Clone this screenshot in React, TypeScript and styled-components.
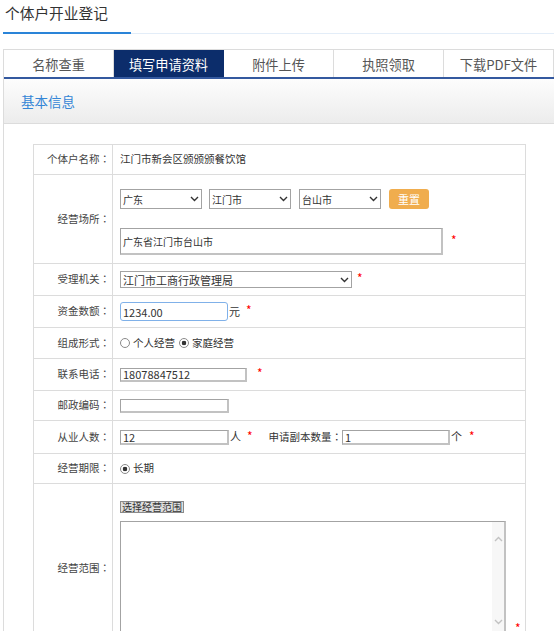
import React from 'react';
import styled, { createGlobalStyle } from 'styled-components';

const GlobalStyle = createGlobalStyle`
  html, body {
    margin: 0;
    padding: 0;
    overflow: hidden;
    background: #fff;
  }
  body {
    font-family: "Noto Sans CJK SC", "Microsoft YaHei", sans-serif;
    color: #333;
  }
  * {
    box-sizing: border-box;
  }
`;

const tabs = ['名称查重', '填写申请资料', '附件上传', '执照领取', '下载PDF文件'];

const Chevron = ({ up, color = '#333' }: { up?: boolean; color?: string }) => (
  <svg width="9" height="6" viewBox="0 0 9 6">
    <path
      d={up ? 'M1 5L4.5 1.5L8 5' : 'M1 1L4.5 4.5L8 1'}
      fill="none"
      stroke={color}
      strokeWidth="1.4"
    />
  </svg>
);

// full-width colon, centred the way the original font draws it
const C = () => <Colon>：</Colon>;

const App = () => {
  return (
    <Page>
      <GlobalStyle />
      <TitleBar>
        <Title>个体户开业登记</Title>
      </TitleBar>
      <Panel>
        <TabBar>
          {tabs.map((t, i) => (
            <Tab key={t} $active={i === 1}>
              {t}
            </Tab>
          ))}
        </TabBar>
        <SectionHeader>基本信息</SectionHeader>

        <FormTable>
          <Row $h={30}>
            <Label>个体户名称<C /></Label>
            <Value>江门市新会区颁颁颁餐饮馆</Value>
          </Row>

          <Row $h={89}>
            <Label>经营场所<C /></Label>
            <Value $top={14} $gap={19}>
              <Line>
                <SelectBox $w={82} $h={20}>
                  <Select defaultValue="gd" $size={10}>
                    <option value="gd">广东</option>
                  </Select>
                  <Arrow>
                    <Chevron />
                  </Arrow>
                </SelectBox>
                <SelectBox $w={82} $h={20} $ml={7}>
                  <Select defaultValue="jm" $size={10}>
                    <option value="jm">江门市</option>
                  </Select>
                  <Arrow>
                    <Chevron />
                  </Arrow>
                </SelectBox>
                <SelectBox $w={82} $h={20} $ml={8}>
                  <Select defaultValue="ts" $size={10}>
                    <option value="ts">台山市</option>
                  </Select>
                  <Arrow>
                    <Chevron />
                  </Arrow>
                </SelectBox>
                <ResetButton>重置</ResetButton>
              </Line>
              <Line>
                <TextInput $w={323} $h={27} $size={10} defaultValue="广东省江门市台山市" />
                <Star $ml={8}>*</Star>
              </Line>
            </Value>
          </Row>

          <Row $h={32}>
            <Label>受理机关<C /></Label>
            <Value>
              <Line>
                <SelectBox $w={232} $h={17}>
                  <Select defaultValue="gs" $size={11}>
                    <option value="gs">江门市工商行政管理局</option>
                  </Select>
                  <Arrow>
                    <Chevron />
                  </Arrow>
                </SelectBox>
                <Star $ml={5}>*</Star>
              </Line>
            </Value>
          </Row>

          <Row $h={32}>
            <Label>资金数额<C /></Label>
            <Value>
              <Line>
                <TextInput $w={108} $h={19} $focus defaultValue="1234.00" />
                <Unit>元</Unit>
                <Star $ml={6}>*</Star>
              </Line>
            </Value>
          </Row>

          <Row $h={31}>
            <Label>组成形式<C /></Label>
            <Value>
              <Line>
                <RadioLabel $mr={4}>
                  <Radio type="radio" name="form" />
                  个人经营
                </RadioLabel>
                <RadioLabel>
                  <Radio type="radio" name="form" defaultChecked />
                  家庭经营
                </RadioLabel>
              </Line>
            </Value>
          </Row>

          <Row $h={32}>
            <Label>联系电话<C /></Label>
            <Value>
              <Line>
                <TextInput $w={127} $h={14} defaultValue="18078847512" />
                <Star $ml={10}>*</Star>
              </Line>
            </Value>
          </Row>

          <Row $h={30}>
            <Label>邮政编码<C /></Label>
            <Value>
              <Line>
                <TextInput $w={109} $h={14} />
              </Line>
            </Value>
          </Row>

          <Row $h={33}>
            <Label>从业人数<C /></Label>
            <Value>
              <Line>
                <TextInput $w={109} $h={15} defaultValue="12" />
                <Unit>人</Unit>
                <Star $ml={6}>*</Star>
                <InlineLabel>申请副本数量<C /></InlineLabel>
                <TextInput $w={108} $h={15} defaultValue="1" />
                <Unit>个</Unit>
                <Star $ml={7}>*</Star>
              </Line>
            </Value>
          </Row>

          <Row $h={30}>
            <Label>经营期限<C /></Label>
            <Value>
              <Line>
                <RadioLabel>
                  <Radio type="radio" name="term" defaultChecked />
                  长期
                </RadioLabel>
              </Line>
            </Value>
          </Row>

          <Row $h={170}>
            <Label>经营范围<C /></Label>
            <Value $top={17} $gap={8}>
              <ScopeButton>选择经营范围</ScopeButton>
              <Line $bottom>
                <AreaBox>
                  <TextArea />
                  <ScrollTrack>
                    <Chevron up color="#c2c2c2" />
                    <Chevron color="#c2c2c2" />
                  </ScrollTrack>
                </AreaBox>
                <Star $ml={9}>*</Star>
              </Line>
            </Value>
          </Row>
        </FormTable>
      </Panel>
    </Page>
  );
};

export default App;

const Page = styled.div`
  padding-left: 3px;
`;

const TitleBar = styled.div`
  border-bottom: 1px solid #e3edf8;
`;

const Title = styled.div`
  display: inline-block;
  width: 128px;
  padding: 0 0 9px 2px;
  margin-bottom: -1px;
  font-size: 14.7px;
  line-height: 21px;
  color: #333;
  border-bottom: 2px solid #2a84d8;
`;

const Panel = styled.div`
  margin-top: 15px;
  width: 560px;
  border-top: 1px solid #dcdcdc;
  border-left: 1px solid #dcdcdc;
  padding-bottom: 40px;
`;

const TabBar = styled.div`
  display: flex;
  height: 29px;
  border-bottom: 2px solid #34599f;
`;

const Tab = styled.div<{ $active?: boolean }>`
  width: 110px;
  flex-shrink: 0;
  display: flex;
  align-items: center;
  justify-content: center;
  padding-top: 1px;
  font-size: 13.2px;
  color: ${(p) => (p.$active ? '#fff' : '#555')};
  background: ${(p) => (p.$active ? '#0c2d6b' : '#fff')};
  border-right: 1px solid ${(p) => (p.$active ? '#0c2d6b' : '#dcdcdc')};
`;

const SectionHeader = styled.div`
  height: 45px;
  display: flex;
  align-items: center;
  padding: 0 0 0 17px;
  font-size: 13.5px;
  color: #3586d6;
  background: linear-gradient(#fdfdfd, #ececec);
  border-bottom: 1px solid #dcdcdc;
`;

const FormTable = styled.div`
  margin: 20px 0 0 29px;
  width: 493px;
  border: 1px solid #dcdcdc;
  border-bottom: none;
`;

const Row = styled.div<{ $h: number }>`
  display: flex;
  height: ${(p) => p.$h}px;
  border-bottom: 1px solid #dcdcdc;
`;

const Label = styled.div`
  width: 79px;
  flex-shrink: 0;
  display: flex;
  align-items: center;
  justify-content: flex-end;
  padding-right: 2px;
  border-right: 1px solid #dcdcdc;
  font-size: 10.5px;
  line-height: 1.2;
  color: #444;
`;

const Colon = styled.span`
  font-family: "Noto Sans CJK TC", "Noto Sans CJK SC", sans-serif;
`;

const Value = styled.div<{ $top?: number; $gap?: number }>`
  flex: 1;
  display: flex;
  flex-direction: column;
  align-items: flex-start;
  justify-content: ${(p) => (p.$top !== undefined ? 'flex-start' : 'center')};
  gap: ${(p) => p.$gap ?? 0}px;
  padding: ${(p) => p.$top ?? 0}px 0 0 7px;
  font-size: 10.5px;
  line-height: 1.2;
  color: #333;
`;

const Line = styled.div<{ $bottom?: boolean }>`
  display: flex;
  align-items: ${(p) => (p.$bottom ? 'flex-end' : 'center')};
`;

const SelectBox = styled.div<{ $w: number; $h: number; $ml?: number }>`
  position: relative;
  flex-shrink: 0;
  width: ${(p) => p.$w}px;
  height: ${(p) => p.$h}px;
  margin-left: ${(p) => p.$ml ?? 0}px;
`;

const Select = styled.select<{ $size: number }>`
  appearance: none;
  width: 100%;
  height: 100%;
  margin: 0;
  padding: 0 14px 0 2px;
  border: 1px solid #a3a3a3;
  border-radius: 0;
  background: #fff;
  font-family: inherit;
  font-size: ${(p) => p.$size}px;
  color: #333;
  outline: none;
`;

const Arrow = styled.span`
  position: absolute;
  right: 3px;
  top: 50%;
  transform: translateY(-50%);
  display: flex;
  pointer-events: none;
`;

const ResetButton = styled.button`
  width: 40px;
  height: 20px;
  margin-left: 8px;
  padding: 0;
  border: none;
  border-radius: 3px;
  background: #f0ad4e;
  color: #fff;
  font-family: inherit;
  font-size: 11px;
`;

const TextInput = styled.input<{ $w: number; $h: number; $size?: number; $focus?: boolean }>`
  width: ${(p) => p.$w}px;
  height: ${(p) => p.$h}px;
  margin: 0;
  padding: 0 2px;
  font-family: inherit;
  font-size: ${(p) => p.$size ?? 11}px;
  color: #333;
  background: #fff;
  outline: none;
  border: 1px solid ${(p) => (p.$focus ? '#80b1e9' : '#a3a3a3')};
  border-right-width: ${(p) => (p.$focus ? 1 : 2)}px;
  border-bottom-width: ${(p) => (p.$focus ? 1 : 2)}px;
  border-right-color: ${(p) => (p.$focus ? '#80b1e9' : '#c2c2c2')};
  border-bottom-color: ${(p) => (p.$focus ? '#80b1e9' : '#c2c2c2')};
  border-radius: ${(p) => (p.$focus ? 3 : 0)}px;
`;

const Unit = styled.span`
  font-size: 11px;
  color: #333;
  margin-left: 1px;
`;

const Star = styled.span<{ $ml: number }>`
  margin-left: ${(p) => p.$ml}px;
  margin-bottom: 3px;
  font-size: 12px;
  line-height: 12px;
  color: #f00;
`;

const InlineLabel = styled.span`
  margin-left: 16px;
  font-size: 10.5px;
  color: #333;
`;

const RadioLabel = styled.label<{ $mr?: number }>`
  display: inline-flex;
  align-items: center;
  margin-right: ${(p) => p.$mr ?? 0}px;
  font-size: 10.5px;
  color: #333;
`;

const Radio = styled.input`
  appearance: none;
  width: 10px;
  height: 10px;
  margin: 0 3px 0 0;
  border: 1px solid #8a8a8a;
  border-radius: 50%;
  background: #fff;

  &:checked {
    background: radial-gradient(circle, #333 0 2px, #fff 2.6px);
  }
`;

const ScopeButton = styled.button`
  height: 12px;
  margin: 0;
  padding: 0 1px;
  border: 1px solid #8a8a8a;
  border-radius: 0;
  background: #dedede;
  font-family: inherit;
  font-size: 10px;
  line-height: 10px;
  color: #333;
`;

const AreaBox = styled.div`
  display: flex;
  width: 386px;
  height: 116px;
  border-top: 1px solid #a3a3a3;
  border-left: 1px solid #a3a3a3;
  border-right: 2px solid #c2c2c2;
  border-bottom: 2px solid #c2c2c2;
`;

const TextArea = styled.textarea`
  flex: 1;
  border: none;
  resize: none;
  outline: none;
  margin: 0;
  padding: 2px;
  font-family: inherit;
  font-size: 11px;
`;

const ScrollTrack = styled.div`
  width: 12px;
  display: flex;
  flex-direction: column;
  align-items: center;
  justify-content: space-between;
  padding: 14px 0 10px;
  background: #f7f7f7;
`;
